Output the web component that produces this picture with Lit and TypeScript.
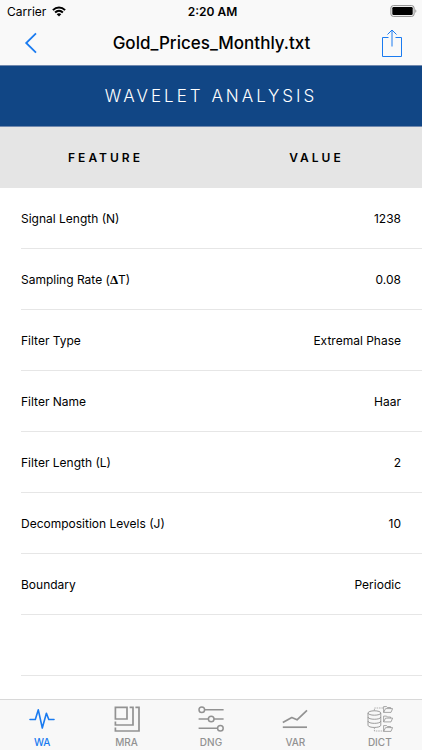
import { LitElement, html, svg, css } from "lit";
import { customElement, state } from "lit/decorators.js";
import { classMap } from "lit/directives/class-map.js";

interface Feature {
  name: unknown;
  value: string;
}

const features: Feature[] = [
  { name: "Signal Length (N)", value: "1238" },
  { name: html`Sampling Rate (<span class="delta">Δ</span>T)`, value: "0.08" },
  { name: "Filter Type", value: "Extremal Phase" },
  { name: "Filter Name", value: "Haar" },
  { name: "Filter Length (L)", value: "2" },
  { name: "Decomposition Levels (J)", value: "10" },
  { name: "Boundary", value: "Periodic" },
];

const folder = (y: number) => svg`
  <path stroke-width="0.8" d="M16.6 ${y + 6.4}V${y + 0.6}H19.6L20.4 ${y + 1.5}H23.6V${y + 2.6}M16.6 ${y + 6.4}L18.6 ${y + 2.6}H25.6L24 ${y + 6.4}Z"/>`;

const tabs = [
  {
    label: "WA",
    icon: svg`<path stroke-width="1.6" stroke-linejoin="round" stroke-linecap="round" d="M1 13.5H6.3L9.3 3.8L13.3 22L17.4 7.2L19.8 13.5H25"/>`,
  },
  {
    label: "MRA",
    icon: svg`<g stroke-width="1.7"><path d="M1.4 1.4H13V13H1.4Z"/><path d="M15.6 1.4H19V19H1.4V15.6"/><path d="M21.4 1.4H25V25H1.4V21.4"/></g>`,
  },
  {
    label: "DNG",
    icon: svg`<g stroke-width="1.5"><circle cx="3.8" cy="3.8" r="2.8"/><circle cx="13.2" cy="13" r="2.8"/><circle cx="22.4" cy="22.2" r="2.8"/><path d="M6.6 3.8H25.6M0.6 13H10.4M16 13H25.6M0.6 22.2H19.6"/></g>`,
  },
  {
    label: "VAR",
    icon: svg`<g stroke-width="1.7"><path stroke-linejoin="round" d="M0.8 16.6L9.8 11.5L15 13.8L25 4.4"/><path d="M0.8 21.2H25"/></g>`,
  },
  {
    label: "DICT",
    icon: svg`<g stroke-width="0.9"><ellipse cx="7.4" cy="7" rx="6.4" ry="2.2"/><path d="M1 7V19.2C1 22.2 13.8 22.2 13.8 19.2V7M1 11C1 14 13.8 14 13.8 11M1 15.1C1 18.1 13.8 18.1 13.8 15.1"/><path stroke-width="0.7" stroke-dasharray="1.6 0.8" d="M7.4 4.6V2H16M7.4 21.6V25H16"/></g>${folder(0)}${folder(9.5)}${folder(19)}`,
  },
];

@customElement("app-root")
export class AppRoot extends LitElement {
  @state() private active = "WA";

  static styles = css`
    :host {
      display: flex;
      flex-direction: column;
      min-height: 100vh;
      background: #fff;
      color: #000;
      font-family: Inter, "Liberation Sans", sans-serif;
    }
    button {
      appearance: none;
      margin: 0;
      padding: 0;
      border: 0;
      background: none;
      font: inherit;
      color: #1a7bf0;
      display: flex;
      cursor: pointer;
    }
    svg {
      display: block;
      fill: none;
      stroke: currentColor;
    }
    .top {
      background: #f9f9f9;
      border-bottom: 1px solid #7189ae;
    }
    .status {
      display: grid;
      grid-template-columns: 1fr auto 1fr;
      align-items: center;
      height: 22px;
      padding: 0 4px 0 7px;
      font-size: 12px;
    }
    .carrier {
      display: flex;
      align-items: center;
      gap: 6px;
    }
    .time {
      font-weight: 600;
    }
    .battery {
      justify-self: end;
    }
    .nav {
      display: grid;
      grid-template-columns: 40px 1fr 40px;
      align-items: center;
      height: 41px;
      padding: 0 10px 2px 11px;
    }
    .back,
    .share {
      height: 40px;
      align-items: center;
      justify-content: center;
    }
    .title {
      margin: 0;
      text-align: center;
      font-size: 17px;
      font-weight: 500;
    }
    .banner {
      margin: 0;
      background: #114685;
      color: #fff;
      border-bottom: 1px solid #7189ae;
      text-align: center;
      font-size: 17px;
      line-height: 60px;
      font-weight: 300;
      letter-spacing: 3px;
    }
    .table,
    .body {
      display: block;
    }
    .head {
      display: block;
      background: #e5e5e5;
      font-size: 12px;
      line-height: 61px;
      letter-spacing: 3px;
    }
    .headrow {
      display: grid;
      grid-template-columns: 1fr 1fr;
    }
    .headrow th {
      padding: 0;
      font-weight: 600;
    }
    .row {
      display: flex;
      justify-content: space-between;
      margin-left: 21px;
      padding: 1px 21px 0 0;
      border-bottom: 1px solid #e6e6e6;
      height: 59px;
      font-size: 12px;
      line-height: 60px;
    }
    .row th,
    .row td {
      padding: 0;
      font-weight: 400;
    }
    .delta {
      font-family: "Liberation Serif", serif;
      font-size: 13px;
      line-height: 1;
      font-weight: 700;
    }
    .tabs {
      display: grid;
      grid-template-columns: repeat(5, 1fr);
      margin-top: auto;
      background: #f8f8f8;
      border-top: 1px solid #d8d8d8;
    }
    .tab {
      flex-direction: column;
      align-items: center;
      gap: 4px;
      padding: 6px 0 1px;
      color: #929292;
      font-size: 10px;
      line-height: 13px;
      font-weight: 500;
    }
    .tab.active {
      color: #1a7bf0;
    }
  `;

  render() {
    return html`
      <header class="top">
        <div class="status">
          <span class="carrier">
            Carrier
            <svg width="14" height="11" viewBox="0 0 14 11" aria-label="Wi-Fi">
              <path stroke-width="2" d="M0.9 4.1C4.4 0.7 9.6 0.7 13.1 4.1M3.1 6.5C5.4 4.3 8.6 4.3 10.9 6.5"/>
              <path fill="currentColor" stroke="none" d="M4.7 8.2C6 7 8 7 9.3 8.2L7 10.6Z"/>
            </svg>
          </span>
          <span class="time">2:20 AM</span>
          <svg class="battery" width="28" height="12" viewBox="0 0 28 12" aria-label="Battery full">
            <rect x="0.9" y="0.6" width="23.2" height="10.8" rx="2.4" stroke="#8c8c8c"/>
            <rect x="2.3" y="2" width="20.4" height="8" rx="1.2" fill="#000" stroke="none"/>
            <path d="M25.4 4.2C26.6 4.6 26.6 7.4 25.4 7.8Z" fill="#8c8c8c" stroke="none"/>
          </svg>
        </div>
        <nav class="nav">
          <button class="back" aria-label="Back">
            <svg width="14" height="22" viewBox="0 0 14 22"><path stroke-width="1.8" d="M12 1.4L2.2 11L12 20.6"/></svg>
          </button>
          <h1 class="title">Gold_Prices_Monthly.txt</h1>
          <button class="share" aria-label="Share">
            <svg width="22" height="28" viewBox="0 0 22 28"><path d="M7.5 8.5H1.5V27.5H20.5V8.5H14.5M11 17.5V1M6.5 5.5L11 1L15.5 5.5"/></svg>
          </button>
        </nav>
      </header>
      <main>
        <h2 class="banner">WAVELET ANALYSIS</h2>
        <table class="table">
          <thead class="head">
            <tr class="headrow"><th scope="col">FEATURE</th><th scope="col">VALUE</th></tr>
          </thead>
          <tbody class="body">
            ${features.map((f) => html`<tr class="row"><th scope="row">${f.name}</th><td>${f.value}</td></tr>`)}
            <tr class="row"><td></td><td></td></tr>
          </tbody>
        </table>
      </main>
      <nav class="tabs">
        ${tabs.map(
          (t) => html`<button
            class=${classMap({ tab: true, active: t.label === this.active })}
            @click=${() => (this.active = t.label)}
          >
            <svg width="26" height="26" viewBox="0 0 26 26">${t.icon}</svg>
            <span>${t.label}</span>
          </button>`
        )}
      </nav>
    `;
  }
}
